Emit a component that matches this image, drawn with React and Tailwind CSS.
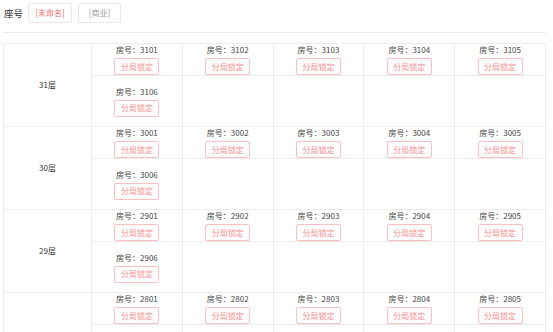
import React from "react";

const floors = [31, 30, 29, 28];

function Room({ no }) {
  return (
    <div className="flex flex-col items-center">
      <div className="text-[8px] leading-[11px] text-[#444]">房号：{no}</div>
      <div className="mt-[3px] w-[45px] h-[17px] border border-[#fbc0c0] rounded-[2px] text-[8px] text-[#f58e8e] flex items-center justify-center">
        分局锁定
      </div>
    </div>
  );
}

function Floor({ f, last }) {
  const first = [1, 2, 3, 4, 5].map((i) => `${f}0${i}`);
  return (
    <div className="flex border-b border-[#ececec]">
      <div className={`w-[88px] shrink-0 border-r border-[#ececec] flex items-center justify-center text-[8px] text-[#333] ${last ? "pt-[6px]" : ""}`}>
        {f}层
      </div>
      <div className="flex-1">
        <div className="grid grid-cols-5 h-[32px] border-b border-[#ececec]">
          {first.map((n) => (
            <div key={n} className="border-r border-[#ececec]">
              <Room no={n} />
            </div>
          ))}
        </div>
        <div className="grid grid-cols-5 h-[50px]">
          <div className="border-r border-[#ececec] flex items-center justify-center">
            <Room no={`${f}06`} />
          </div>
          <div className="border-r border-[#ececec]" />
          <div className="border-r border-[#ececec]" />
          <div className="border-r border-[#ececec]" />
          <div className="border-r border-[#ececec]" />
        </div>
      </div>
    </div>
  );
}

export default function App() {
  return (
    <div className="w-[553px] h-[332px] overflow-hidden bg-white font-['Noto_Sans_CJK_SC',sans-serif]">
      <div className="flex items-center pt-[3px] pl-[4px] h-[23px]">
        <div className="text-[9.5px] text-[#333] w-[24px]">座号</div>
        <div className="w-[44px] h-[20px] border border-[#e8e8e8] rounded-[2px] flex items-center justify-center text-[8px] text-[#f56c6c]">
          [未命名]
        </div>
        <div className="ml-[6px] w-[43px] h-[20px] border border-[#e8e8e8] rounded-[2px] flex items-center justify-center text-[8px] text-[#999]">
          [商业]
        </div>
      </div>
      <div className="ml-[3px] w-[543px] mt-[9px] border-t border-[#ececec]" />
      <div className="ml-[3px] w-[543px] mt-[10px] border-l border-t border-[#ececec]">
        {floors.map((f, i) => (
          <Floor key={f} f={f} last={i === floors.length - 1} />
        ))}
      </div>
    </div>
  );
}
